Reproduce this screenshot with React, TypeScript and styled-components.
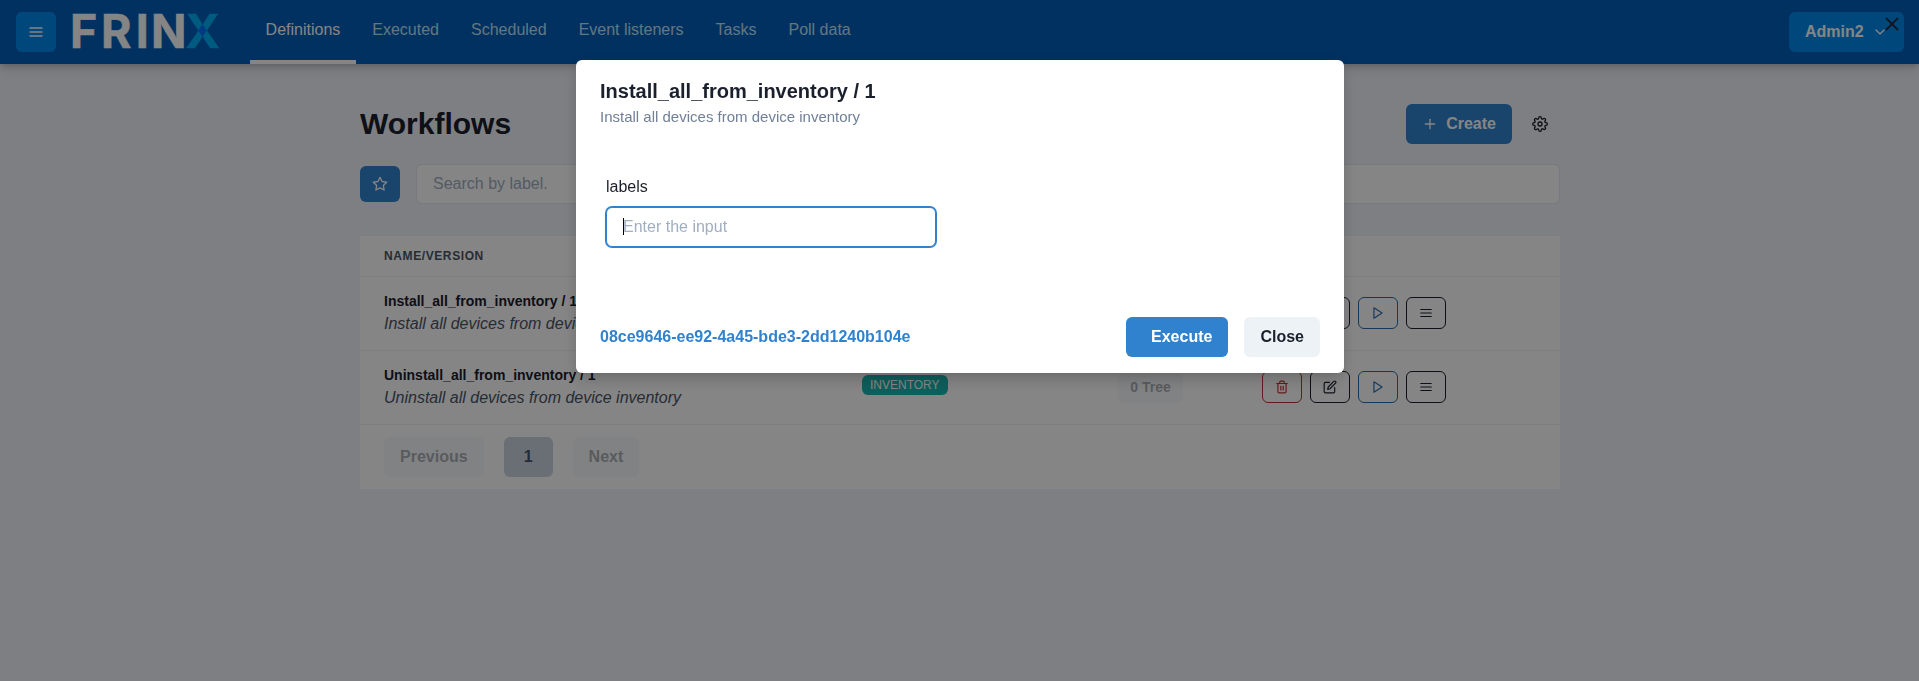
import React from 'react';
import styled, { createGlobalStyle, css } from 'styled-components';
import {
  FiChevronDown,
  FiEdit,
  FiMenu,
  FiPlay,
  FiPlus,
  FiSettings,
  FiStar,
  FiTrash2,
  FiX,
} from 'react-icons/fi';

const GlobalStyle = createGlobalStyle`
  *, *::before, *::after { box-sizing: border-box; }
  html, body { margin: 0; height: 100%; overflow: hidden; }
  body {
    background: #f1f3f9;
    color: #1a202c;
    font-family: "Liberation Sans", Arial, sans-serif;
    font-size: 16px;
    line-height: 24px;
  }
  button, input { font: inherit; color: inherit; margin: 0; border: 0; }
  svg { display: block; flex: none; }
`;

const Page = styled.div`
  min-height: 100vh;
`;

const Header = styled.header`
  display: flex;
  align-items: center;
  height: 64px;
  padding: 0 15px 0 16px;
  background: #005eb8;
  color: #fff;
  box-shadow: 0 4px 6px -1px rgba(0, 0, 0, 0.1), 0 2px 4px -1px rgba(0, 0, 0, 0.06),
    0 4px 12px rgba(0, 0, 0, 0.12);
`;

const Button = styled.button<{ $variant?: 'primary' | 'brand' | 'muted' | 'active' }>`
  display: inline-flex;
  align-items: center;
  justify-content: center;
  height: 40px;
  padding: 0 16px;
  border-radius: 6px;
  font-weight: 600;
  white-space: nowrap;
  background: #edf2f7;
  ${({ $variant }) => $variant === 'primary' && css`background: #3182ce; color: #fff;`}
  ${({ $variant }) => $variant === 'brand' && css`background: #008aee; color: #fff;`}
  ${({ $variant }) => $variant === 'muted' && css`opacity: 0.4; color: #2d3748;`}
  ${({ $variant }) => $variant === 'active' && css`background: #cbd5e0; color: #4a5568; width: 49px;`}
`;

const IconButton = styled(Button)<{ $height?: number; $plain?: boolean }>`
  width: 40px;
  height: ${({ $height }) => $height ?? 40}px;
  padding: 0;
  ${({ $plain }) => $plain && css`background: transparent;`}
`;

const Logo = styled.svg`
  margin-left: 12px;
  width: 156px;
  height: 64px;
  overflow: visible;
`;

const Tabs = styled.nav`
  display: flex;
  align-self: stretch;
  margin-left: 25.6px;
  flex: 1;
`;

const Tab = styled.a<{ $active?: boolean }>`
  display: flex;
  align-items: center;
  padding: 0 16px;
  border-bottom: 4px solid ${({ $active }) => ($active ? '#fff' : 'transparent')};
  color: ${({ $active }) => ($active ? '#fff' : '#bee3f8')};
`;

const UserButton = styled(Button)`
  width: 115px;
  justify-content: flex-start;
  svg { margin-left: 8px; }
`;

const Container = styled.main`
  width: 1200px;
  margin: 40px auto 0;
  position: relative;
  left: 0.5px;
`;

const TitleBar = styled.div`
  display: flex;
  align-items: center;
  height: 40px;
`;

const Title = styled.h1`
  flex: 1;
  margin: 0;
  font-size: 30px;
  line-height: 36px;
  font-weight: 700;
`;

const CreateButton = styled(Button)`
  margin-right: 8px;
  svg { margin-right: 8px; }
`;

const SearchBar = styled.div`
  display: flex;
  align-items: center;
  gap: 16px;
  margin-top: 20px;
`;

const SearchInput = styled.input`
  flex: 1;
  height: 40px;
  padding: 0 16px;
  border: 1px solid #e2e8f0;
  border-radius: 6px;
  background: #fff;
  outline: none;
  &::placeholder { color: #a0aec0; opacity: 1; }
`;

const Table = styled.section`
  margin-top: 32px;
  background: #fff;
`;

const Row = styled.div<{ $head?: boolean }>`
  display: grid;
  grid-template-columns: 478px 256px 144px 1fr;
  align-items: center;
  height: ${({ $head }) => ($head ? 41 : 74)}px;
  padding: 0 24px ${({ $head }) => ($head ? 0 : 1)}px;
  border-bottom: 1px solid #edf2f7;
`;

const HeadCell = styled.div`
  font-size: 12px;
  line-height: 16px;
  font-weight: 700;
  letter-spacing: 0.6px;
  color: #4a5568;
`;

const WorkflowName = styled.div`
  font-size: 14px;
  line-height: 21px;
  font-weight: 700;
`;

const Description = styled.div`
  font-style: italic;
  line-height: 24px;
  color: #4a5568;
`;

const Badge = styled.span`
  display: inline-flex;
  align-items: center;
  height: 20px;
  margin-bottom: 4px;
  padding: 0 8px;
  border-radius: 6px;
  background: #19b5b0;
  color: #fff;
  font-size: 12px;
`;

const BadgeCell = styled.div`
  display: flex;
`;

const TreeButton = styled(Button)`
  height: 32px;
  width: 65px;
  padding: 0;
  font-size: 14px;
`;

const Actions = styled.div`
  display: flex;
  gap: 8px;
`;

const ActionButton = styled.button<{ $color: string }>`
  display: flex;
  align-items: center;
  justify-content: center;
  width: 40px;
  height: 32px;
  padding: 0;
  background: transparent;
  border: 1px solid ${({ $color }) => $color};
  border-radius: 6px;
  color: ${({ $color }) => $color};
`;

const Pagination = styled.div`
  display: flex;
  gap: 20px;
  padding: 12px 24px;
`;

const Overlay = styled.div`
  position: fixed;
  inset: 0;
  background: rgba(0, 0, 0, 0.48);
`;

const CloseIcon = styled.button`
  position: absolute;
  top: 8px;
  right: 11px;
  display: flex;
  align-items: center;
  justify-content: center;
  width: 32px;
  height: 32px;
  padding: 0;
  background: transparent;
  color: #10161f;
`;

const Dialog = styled.div`
  width: 768px;
  height: 313px;
  margin: 60px auto 0;
  position: relative;
  left: 0.5px;
  display: flex;
  flex-direction: column;
  padding: 16px 24px;
  border-radius: 6px;
  background: #fff;
  box-shadow: 0 10px 15px -3px rgba(0, 0, 0, 0.1), 0 4px 6px -2px rgba(0, 0, 0, 0.05),
    0 4px 16px rgba(0, 0, 0, 0.12);
`;

const DialogTitle = styled.h2`
  margin: 0;
  font-size: 20px;
  line-height: 30px;
  font-weight: 700;
`;

const DialogSubtitle = styled.p`
  margin: 0;
  font-size: 15px;
  line-height: 22px;
  color: #718096;
`;

const Field = styled.label`
  display: flex;
  flex-direction: column;
  gap: 8px;
  width: 330px;
  margin: 47px 0 0 6px;
`;

const FieldInput = styled.input`
  height: 40px;
  padding: 0 16px;
  border: 1px solid #3182ce;
  border-radius: 6px;
  box-shadow: 0 0 0 1px #3182ce;
  outline: none;
  &::placeholder { color: #a0aec0; opacity: 1; }
`;

const Caret = styled.span`
  position: absolute;
  left: 17px;
  top: 11px;
  width: 1px;
  height: 17px;
  background: #000;
`;

const FieldBox = styled.div`
  position: relative;
  display: flex;
  flex-direction: column;
`;

const DialogFooter = styled.footer`
  display: flex;
  align-items: center;
  gap: 16px;
  margin-top: auto;
`;

const ExecutionLink = styled.a`
  flex: 1;
  font-weight: 600;
  color: #3182ce;
`;

const ExecuteButton = styled(Button)`
  padding-left: 25px;
`;

const tabs = ['Definitions', 'Executed', 'Scheduled', 'Event listeners', 'Tasks', 'Poll data'];

const workflows = [
  { name: 'Install_all_from_inventory / 1', description: 'Install all devices from device inventory' },
  { name: 'Uninstall_all_from_inventory / 1', description: 'Uninstall all devices from device inventory' },
];

function FrinxLogo() {
  return (
    <Logo viewBox="68 0 156 64" fontFamily="Inter, sans-serif" fontWeight={700} fontSize={46.5}>
      <text y="48" fill="#fff" stroke="#fff" strokeWidth="0.5">
        <tspan x="70">F</tspan>
        <tspan x="101">R</tspan>
        <tspan x="135.7">I</tspan>
        <tspan x="151">N</tspan>
      </text>
      <text x="185.6" y="48" fill="#00aef5" stroke="#00aef5" strokeWidth="0.5">X</text>
      <path d="M202.4 24l4.3 6.5-4.3 6.5-4.3-6.5z" fill="#006ff5" />
    </Logo>
  );
}

function WorkflowRow({ name, description }: { name: string; description: string }) {
  return (
    <Row>
      <div>
        <WorkflowName>{name}</WorkflowName>
        <Description>{description}</Description>
      </div>
      <BadgeCell><Badge>INVENTORY</Badge></BadgeCell>
      <TreeButton $variant="muted">0 Tree</TreeButton>
      <Actions>
        <ActionButton $color="#c53030" aria-label="Delete"><FiTrash2 size={14} /></ActionButton>
        <ActionButton $color="#1a202c" aria-label="Edit"><FiEdit size={14} /></ActionButton>
        <ActionButton $color="#2b6cb0" aria-label="Run"><FiPlay size={14} /></ActionButton>
        <ActionButton $color="#1a202c" aria-label="More"><FiMenu size={14} /></ActionButton>
      </Actions>
    </Row>
  );
}

export default function App() {
  return (
    <Page>
      <GlobalStyle />
      <Header>
        <IconButton $variant="brand" aria-label="Menu"><FiMenu size={16} /></IconButton>
        <FrinxLogo />
        <Tabs>
          {tabs.map((tab, index) => <Tab key={tab} $active={index === 0}>{tab}</Tab>)}
        </Tabs>
        <UserButton $variant="brand">Admin2<FiChevronDown size={16} /></UserButton>
      </Header>

      <Container>
        <TitleBar>
          <Title>Workflows</Title>
          <CreateButton $variant="primary"><FiPlus size={16} />Create</CreateButton>
          <IconButton $plain aria-label="Settings"><FiSettings size={16} /></IconButton>
        </TitleBar>
        <SearchBar>
          <IconButton $variant="primary" $height={36} aria-label="Favourites"><FiStar size={16} /></IconButton>
          <SearchInput placeholder="Search by label." />
        </SearchBar>
        <Table>
          <Row $head><HeadCell>NAME/VERSION</HeadCell></Row>
          {workflows.map((workflow) => <WorkflowRow key={workflow.name} {...workflow} />)}
          <Pagination>
            <Button $variant="muted">Previous</Button>
            <Button $variant="active">1</Button>
            <Button $variant="muted">Next</Button>
          </Pagination>
        </Table>
      </Container>

      <Overlay>
        <CloseIcon aria-label="Dismiss"><FiX size={22} /></CloseIcon>
        <Dialog role="dialog">
          <DialogTitle>Install_all_from_inventory / 1</DialogTitle>
          <DialogSubtitle>Install all devices from device inventory</DialogSubtitle>
          <Field>
            labels
            <FieldBox>
              <FieldInput placeholder="Enter the input" />
              <Caret />
            </FieldBox>
          </Field>
          <DialogFooter>
            <ExecutionLink>08ce9646-ee92-4a45-bde3-2dd1240b104e</ExecutionLink>
            <ExecuteButton $variant="primary">Execute</ExecuteButton>
            <Button>Close</Button>
          </DialogFooter>
        </Dialog>
      </Overlay>
    </Page>
  );
}
